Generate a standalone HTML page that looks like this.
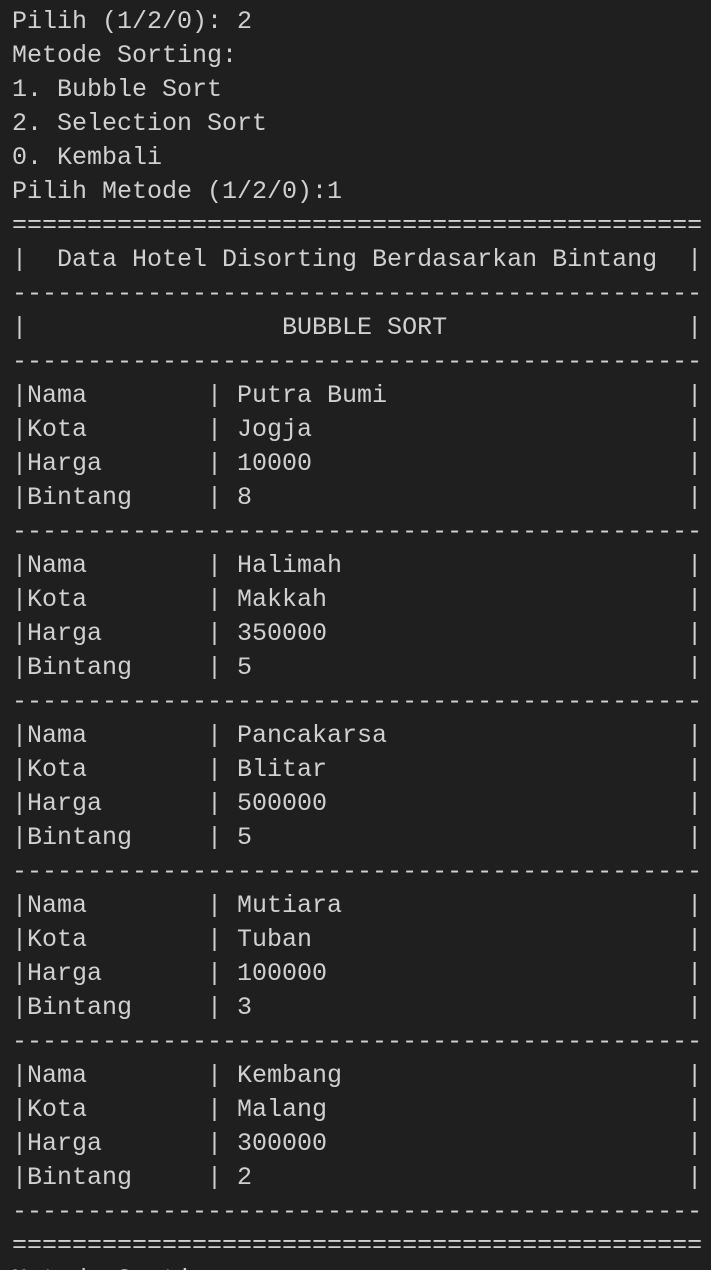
<!DOCTYPE html>
<html><head><meta charset="utf-8"><style>
html,body{margin:0;padding:0;background:#1f1f1f;width:711px;height:1270px;overflow:hidden}
pre{margin:0;padding:5px 0 0 12px;font-family:"Liberation Mono",monospace;font-size:25px;line-height:34px;color:#d0d0d0;white-space:pre}
</style></head><body><pre>Pilih (1/2/0): 2
Metode Sorting:
1. Bubble Sort
2. Selection Sort
0. Kembali
Pilih Metode (1/2/0):1
==============================================
|  Data Hotel Disorting Berdasarkan Bintang  |
----------------------------------------------
|                 BUBBLE SORT                |
----------------------------------------------
|Nama        | Putra Bumi                    |
|Kota        | Jogja                         |
|Harga       | 10000                         |
|Bintang     | 8                             |
----------------------------------------------
|Nama        | Halimah                       |
|Kota        | Makkah                        |
|Harga       | 350000                        |
|Bintang     | 5                             |
----------------------------------------------
|Nama        | Pancakarsa                    |
|Kota        | Blitar                        |
|Harga       | 500000                        |
|Bintang     | 5                             |
----------------------------------------------
|Nama        | Mutiara                       |
|Kota        | Tuban                         |
|Harga       | 100000                        |
|Bintang     | 3                             |
----------------------------------------------
|Nama        | Kembang                       |
|Kota        | Malang                        |
|Harga       | 300000                        |
|Bintang     | 2                             |
----------------------------------------------
==============================================
Metode Sorting:</pre></body></html>
